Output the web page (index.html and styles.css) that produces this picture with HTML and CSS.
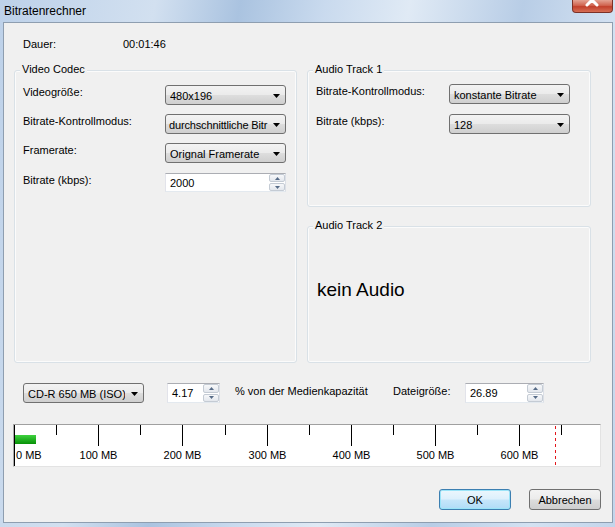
FILE: index.html
```html
<!DOCTYPE html>
<html lang="de">
<head>
  <meta charset="UTF-8" />
  <title>Bitratenrechner</title>
  <link rel="stylesheet" href="styles.css">
</head>
<body>
  <div class="window">
    <div class="titlebar">
      <span class="title">Bitratenrechner</span>
      <span class="close">
        <svg width="41" height="13" viewBox="0 0 41 13">
          <path d="M15 -4L25 6M25 -4L15 6" stroke="#fff" stroke-width="3" stroke-linecap="round"/>
        </svg>
      </span>
    </div>

    <div class="client">
      <div class="duration">
        <span class="dur-label">Dauer:</span>
        <span>00:01:46</span>
      </div>

      <div class="groups">
        <div class="group video">
          <div class="legend">Video Codec</div>
          <div class="row">
            <span class="lbl">Videogröße:</span>
            <div class="combo"><span class="combo-text">480x196</span><svg class="arrow" width="7" height="4"><polygon points="0,0 7,0 3.5,4"/></svg></div>
          </div>
          <div class="row">
            <span class="lbl">Bitrate-Kontrollmodus:</span>
            <div class="combo combo-tight"><span class="combo-text">durchschnittliche Bitr</span><svg class="arrow" width="7" height="4"><polygon points="0,0 7,0 3.5,4"/></svg></div>
          </div>
          <div class="row">
            <span class="lbl">Framerate:</span>
            <div class="combo"><span class="combo-text">Orignal Framerate</span><svg class="arrow" width="7" height="4"><polygon points="0,0 7,0 3.5,4"/></svg></div>
          </div>
          <div class="row row-spin">
            <span class="lbl">Bitrate (kbps):</span>
            <div class="spin">
              <span class="spin-text">2000</span>
              <div class="spin-btns">
                <span class="spin-btn"><svg width="5" height="3"><polygon points="0,3 5,3 2.5,0"/></svg></span>
                <span class="spin-btn"><svg width="5" height="3"><polygon points="0,0 5,0 2.5,3"/></svg></span>
              </div>
            </div>
          </div>
        </div>

        <div class="col">
          <div class="group audio1">
            <div class="legend">Audio Track 1</div>
            <div class="row">
              <span class="lbl">Bitrate-Kontrollmodus:</span>
              <div class="combo"><span class="combo-text">konstante Bitrate</span><svg class="arrow" width="7" height="4"><polygon points="0,0 7,0 3.5,4"/></svg></div>
            </div>
            <div class="row">
              <span class="lbl">Bitrate (kbps):</span>
              <div class="combo"><span class="combo-text">128</span><svg class="arrow" width="7" height="4"><polygon points="0,0 7,0 3.5,4"/></svg></div>
            </div>
          </div>
          <div class="group audio2">
            <div class="legend">Audio Track 2</div>
            <div class="no-audio">kein Audio</div>
          </div>
        </div>
      </div>

      <div class="media">
        <div class="combo media-combo"><span class="combo-text">CD-R 650 MB (ISO)</span><svg class="arrow" width="7" height="4"><polygon points="0,0 7,0 3.5,4"/></svg></div>
        <div class="spin spin-percent">
          <span class="spin-text">4.17</span>
          <div class="spin-btns">
            <span class="spin-btn"><svg width="5" height="3"><polygon points="0,3 5,3 2.5,0"/></svg></span>
            <span class="spin-btn"><svg width="5" height="3"><polygon points="0,0 5,0 2.5,3"/></svg></span>
          </div>
        </div>
        <span class="media-lbl capacity">% von der Medienkapazität</span>
        <span class="media-lbl filesize">Dateigröße:</span>
        <div class="spin spin-size">
          <span class="spin-text">26.89</span>
          <div class="spin-btns">
            <span class="spin-btn"><svg width="5" height="3"><polygon points="0,3 5,3 2.5,0"/></svg></span>
            <span class="spin-btn"><svg width="5" height="3"><polygon points="0,0 5,0 2.5,3"/></svg></span>
          </div>
        </div>
      </div>

      <div class="ruler">
        <svg width="586" height="41" viewBox="0 0 586 41">
          <defs>
            <linearGradient id="fill" x1="0" y1="0" x2="0" y2="1">
              <stop offset="0" stop-color="#3fd23f"/>
              <stop offset="1" stop-color="#079107"/>
            </linearGradient>
          </defs>
          <g stroke="#000" stroke-width="1">
            <path d="M0.5 0V41"/>
            <path d="M84.5 0V21M168.5 0V21M253.5 0V21M337.5 0V21M421.5 0V21M505.5 0V21"/>
            <path d="M42.5 0V10M126.5 0V10M211.5 0V10M295.5 0V10M379.5 0V10M463.5 0V10M547.5 0V10"/>
          </g>
          <rect x="1" y="10" width="21" height="9" fill="url(#fill)"/>
          <path d="M541.5 1V41" stroke="#e3161b" stroke-width="1" stroke-dasharray="3 3"/>
          <g class="ticks">
            <text x="2" y="34">0 MB</text>
            <text x="84.5" y="34" text-anchor="middle">100 MB</text>
            <text x="168.5" y="34" text-anchor="middle">200 MB</text>
            <text x="253.5" y="34" text-anchor="middle">300 MB</text>
            <text x="337.5" y="34" text-anchor="middle">400 MB</text>
            <text x="421.5" y="34" text-anchor="middle">500 MB</text>
            <text x="505.5" y="34" text-anchor="middle">600 MB</text>
          </g>
        </svg>
      </div>

      <div class="buttons">
        <button class="btn btn-default">OK</button>
        <button class="btn">Abbrechen</button>
      </div>
    </div>
  </div>
</body>
</html>
```

FILE: styles.css
```css
* { box-sizing: border-box; }

body {
  margin: 0;
  font-family: 'Liberation Sans', Arial, sans-serif;
  font-size: 11px;
  color: #000;
}

.window {
  width: 615px;
  height: 527px;
  display: flex;
  flex-direction: column;
  background: linear-gradient(100deg, #bdd1e9 0%, #d2e0f0 22%, #aac3e0 34%, #c9daee 46%, #e0eaf5 58%, #b8cde6 74%, #d4e2f2 88%, #c3d5eb 100%);
}

.titlebar {
  height: 22px;
  flex: 0 0 22px;
  display: flex;
  justify-content: space-between;
  align-items: flex-start;
  padding-left: 4px;
}

.title {
  font-size: 12px;
  line-height: 22px;
}

.close {
  width: 41px;
  height: 13px;
  margin-right: 2px;
  border: 1px solid #7c3127;
  border-top: none;
  border-radius: 0 0 4px 4px;
  background: linear-gradient(#e4a293, #d06450 45%, #c2402c 55%, #d66e55);
  overflow: hidden;
}

.close svg { display: block; margin: -1px 0 0 -1px; }

.client {
  flex: 1;
  margin: 0 2px 4px 3px;
  border: 1px solid #8e9eb0;
  background: #f0f0f0;
  display: flex;
  flex-direction: column;
}

.duration {
  display: flex;
  margin-top: 15px;
  padding-left: 19px;
  line-height: 13px;
}

.dur-label { width: 100px; }

.groups {
  display: flex;
  gap: 10px;
  margin: 19px 0 0 10px;
}

.group {
  display: flex;
  flex-direction: column;
  border: 1px solid #d9e1e7;
  border-radius: 3px;
  box-shadow: inset 0 0 0 1px #fbfbfb;
}

.legend {
  align-self: flex-start;
  margin: -8px 0 0 5px;
  padding: 0 2px;
  background: #f0f0f0;
  line-height: 13px;
}

.video { width: 283px; height: 293px; }

.col {
  width: 284px;
  display: flex;
  flex-direction: column;
}

.audio1 { height: 137px; }

.audio2 {
  height: 137px;
  margin-top: 19px;
}

.row {
  display: flex;
  align-items: flex-start;
  height: 20px;
  margin-top: 9px;
  padding-left: 8px;
}

.row-spin { margin-top: 10px; }

.audio1 .row { margin-top: 10px; }
.audio1 .row:nth-child(2) { margin-top: 8px; }

.lbl {
  padding-top: 1px;
  line-height: 13px;
}

.video .lbl { width: 142px; }
.audio1 .lbl { width: 133px; }

.combo {
  width: 121px;
  height: 20px;
  display: flex;
  align-items: center;
  gap: 6px;
  padding: 0 5px 0 4px;
  border: 1px solid #707070;
  border-radius: 3px;
  background: linear-gradient(#f3f3f3 0%, #ebebeb 48%, #dddddd 52%, #cfcfcf 100%);
}

.combo-tight {
  gap: 3px;
  padding-left: 3px;
}

.combo-tight .combo-text { letter-spacing: -0.15px; }

.combo-text {
  flex: 1;
  overflow: hidden;
  white-space: nowrap;
  line-height: 14px;
  padding-top: 1px;
}

.arrow { flex: 0 0 7px; margin-top: 1px; }

.spin {
  width: 121px;
  height: 19px;
  display: flex;
  border: 1px solid;
  border-color: #abadb3 #dbdfe6 #e3e9ef #e2e3ea;
  background: #fff;
}

.spin-text {
  flex: 1;
  padding: 2px 0 0 4px;
  line-height: 14px;
}

.spin-btns {
  width: 17px;
  display: flex;
  flex-direction: column;
  gap: 1px;
  padding: 0 0 0 1px;
}

.spin-btn {
  flex: 1;
  display: flex;
  align-items: center;
  justify-content: center;
  border: 1px solid #c4cbd4;
  border-radius: 2px;
  background: linear-gradient(#f7f8fa, #e3e7ed);
}

.spin-btn svg { display: block; fill: #566b87; }

.no-audio {
  margin: 47px 0 0 9px;
  font-size: 19px;
  line-height: 22px;
}

.media {
  display: flex;
  align-items: flex-start;
  margin-top: 20px;
  padding-left: 19px;
}

.media-combo { flex: 0 0 121px; }

.spin-percent {
  width: 53px;
  height: 20px;
  margin-left: 23px;
}

.spin-size {
  width: 79px;
  height: 20px;
}

.media-lbl {
  margin-top: 2px;
  line-height: 13px;
}

.capacity { width: 158px; margin-left: 15px; }
.filesize { width: 72px; }

.ruler {
  width: 588px;
  height: 43px;
  margin: 21px 0 0 9px;
  border: 1px solid;
  border-color: #a0a0a0 #e3e3e3 #e3e3e3 #a8a8a8;
  background: #fff;
}

.ruler svg { display: block; }

.ticks text {
  font-family: 'Liberation Sans', Arial, sans-serif;
  font-size: 11px;
  fill: #000;
}

.buttons {
  display: flex;
  justify-content: flex-end;
  gap: 18px;
  margin-top: 22px;
  padding-right: 11px;
}

.btn {
  width: 72px;
  height: 21px;
  padding: 0;
  font-family: inherit;
  font-size: 11px;
  color: #000;
  border: 1px solid #707070;
  border-radius: 3px;
  background: linear-gradient(#f3f3f3 0%, #ebebeb 48%, #dddddd 52%, #cfcfcf 100%);
}

.btn-default {
  border-color: #3c7fb1;
  background: linear-gradient(#ecf7fd 0%, #dcf0fc 48%, #c6e6fa 52%, #afdcf7 100%);
  box-shadow: inset 0 0 0 1px #9be4f8;
}
```
